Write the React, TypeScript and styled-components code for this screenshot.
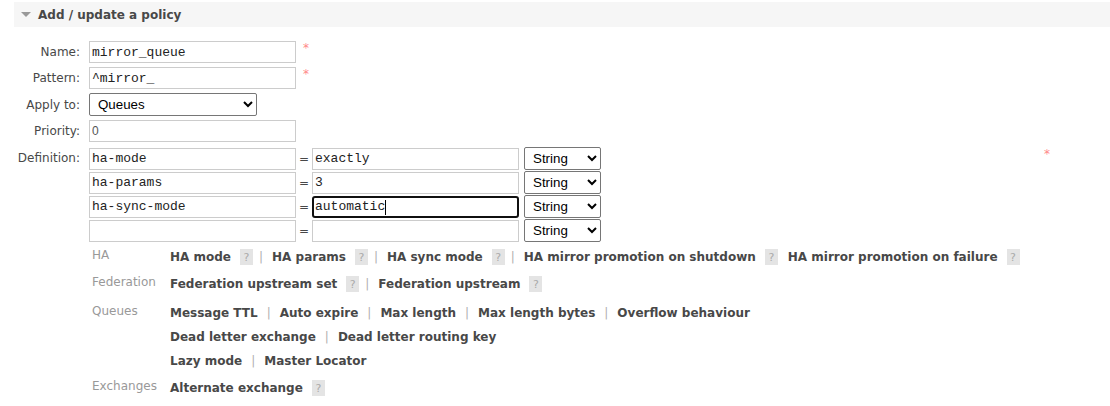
import React from "react";
import styled, { createGlobalStyle } from "styled-components";

const Global = createGlobalStyle`
  html, body { margin: 0; padding: 0; background: #fff; }
  body {
    font-family: "DejaVu Sans", Verdana, sans-serif;
    font-size: 12px;
    color: #484848;
  }
`;

const Section = styled.section`
  padding: 2px 0 0 14px;
`;

const SectionHeader = styled.div`
  display: flex;
  align-items: center;
  gap: 7px;
  height: 25px;
  padding-left: 7px;
  background: #f6f6f6;
`;

const Triangle = styled.span`
  width: 0;
  height: 0;
  border-left: 5px solid transparent;
  border-right: 5px solid transparent;
  border-top: 5px solid #999;
`;

const Title = styled.h2`
  margin: 0;
  font-size: 12px;
  font-weight: bold;
  color: #484848;
`;

const Form = styled.div`
  display: grid;
  grid-template-columns: 66px auto;
  column-gap: 9px;
  row-gap: 4px;
  margin-top: 14px;
`;

const Label = styled.label<{ $top?: boolean }>`
  display: flex;
  justify-content: flex-end;
  align-items: center;
  align-self: ${(p) => (p.$top ? "start" : "center")};
  height: 22px;
  margin-top: ${(p) => (p.$top ? 1 : 0)}px;
  white-space: nowrap;
  color: #484848;
`;

const FieldCell = styled.div`
  display: flex;
  align-items: flex-start;
  gap: 7px;
`;

const DefCell = styled.div`
  display: flex;
  align-items: flex-start;
  width: 961px;
  margin-top: 1px;
`;

const DefBody = styled.div`
  display: flex;
  flex-direction: column;
`;

const Mand = styled.span<{ $far?: boolean }>`
  color: #f88;
  font-size: 12px;
  line-height: 12px;
  margin-top: 1px;
  margin-left: ${(p) => (p.$far ? "auto" : "0")};
`;

const TextInput = styled.input<{ $sans?: boolean; $focused?: boolean; $w?: number }>`
  box-sizing: border-box;
  width: ${(p) => p.$w ?? 207}px;
  height: 22px;
  margin: 0;
  padding: 0 ${(p) => (p.$focused ? 1 : 2)}px;
  border: ${(p) => (p.$focused ? "2px solid #101010" : "1px solid #ccc")};
  border-radius: ${(p) => (p.$focused ? "3px" : "0")};
  background: #fff;
  color: ${(p) => (p.$sans ? "#555" : "#222")};
  font-family: ${(p) => (p.$sans ? '"Liberation Sans", Arial, sans-serif' : '"Liberation Mono", "Courier New", monospace')};
  font-size: ${(p) => (p.$sans ? "12px" : "13px")};
  outline: none;
`;

const Select = styled.select<{ $w: number }>`
  box-sizing: border-box;
  width: ${(p) => p.$w}px;
  height: 23px;
  margin: 0;
  padding-left: 4px;
  border: 1px solid #767676;
  border-radius: 2px;
  background: #fff;
  color: #000;
  font-family: "Liberation Sans", Arial, sans-serif;
  font-size: 13.33px;
`;

const MultiField = styled.div`
  display: flex;
  flex-direction: column;
  gap: 1px;
`;

const MultiRow = styled.div`
  display: flex;
  align-items: center;
  height: 23px;
`;

const Eq = styled.span`
  width: 16px;
  text-align: center;
  color: #484848;
`;

const TypeSelect = styled(Select)`
  margin-left: 5px;
`;

const CaretWrap = styled.span`
  position: relative;
  display: inline-flex;
`;

const Caret = styled.span<{ $left: number }>`
  position: absolute;
  top: 4px;
  left: ${(p) => p.$left}px;
  width: 1px;
  height: 15px;
  background: #000;
`;

const Help = styled.div`
  display: grid;
  grid-template-columns: 78px auto;
  margin: 3px 0 0 3px;
`;

const HelpLabel = styled.div`
  color: #999;
  line-height: 20px;
  white-space: nowrap;
`;

const HelpLinks = styled.div<{ $pad: number }>`
  padding-bottom: ${(p) => p.$pad}px;
`;

const LinkLine = styled.div`
  display: flex;
  align-items: center;
  height: 24px;
  white-space: nowrap;
`;

const Link = styled.span`
  font-weight: bold;
  color: #484848;
  cursor: pointer;
`;

const HelpMark = styled.span`
  display: inline-flex;
  align-items: center;
  justify-content: center;
  width: 13px;
  height: 16px;
  margin-left: 9px;
  background: #e4e4e4;
  color: #aaa;
  font-size: 11px;
`;

const Sep = styled.span<{ $afterMark?: boolean }>`
  color: #b0b0b0;
  margin: 0 9px 0 ${(p) => (p.$afterMark ? 6 : 9)}px;
`;

const Gap = styled.span`
  width: 10px;
`;

type Item = { text: string; help?: boolean; sep?: boolean };

const groups: { label: string; pad: number; lines: Item[][] }[] = [
  {
    label: "HA",
    pad: 3,
    lines: [
      [
        { text: "HA mode", help: true, sep: true },
        { text: "HA params", help: true, sep: true },
        { text: "HA sync mode", help: true, sep: true },
        { text: "HA mirror promotion on shutdown", help: true },
        { text: "HA mirror promotion on failure", help: true },
      ],
    ],
  },
  {
    label: "Federation",
    pad: 5,
    lines: [
      [
        { text: "Federation upstream set", help: true, sep: true },
        { text: "Federation upstream", help: true },
      ],
    ],
  },
  {
    label: "Queues",
    pad: 3,
    lines: [
      [
        { text: "Message TTL", sep: true },
        { text: "Auto expire", sep: true },
        { text: "Max length", sep: true },
        { text: "Max length bytes", sep: true },
        { text: "Overflow behaviour" },
      ],
      [{ text: "Dead letter exchange", sep: true }, { text: "Dead letter routing key" }],
      [{ text: "Lazy mode", sep: true }, { text: "Master Locator" }],
    ],
  },
  {
    label: "Exchanges",
    pad: 0,
    lines: [[{ text: "Alternate exchange", help: true }]],
  },
];

const defs = [
  { key: "ha-mode", value: "exactly" },
  { key: "ha-params", value: "3" },
  { key: "ha-sync-mode", value: "automatic", focused: true },
  { key: "", value: "" },
];

function TypeSel() {
  return (
    <TypeSelect $w={77} defaultValue="String">
      <option>String</option>
      <option>Number</option>
      <option>Boolean</option>
      <option>List</option>
    </TypeSelect>
  );
}

export default function App() {
  return (
    <>
      <Global />
      <Section>
        <SectionHeader>
          <Triangle />
          <Title>Add / update a policy</Title>
        </SectionHeader>
        <Form>
          <Label>Name:</Label>
          <FieldCell>
            <TextInput defaultValue="mirror_queue" />
            <Mand>*</Mand>
          </FieldCell>

          <Label>Pattern:</Label>
          <FieldCell>
            <TextInput defaultValue="^mirror_" />
            <Mand>*</Mand>
          </FieldCell>

          <Label>Apply to:</Label>
          <FieldCell>
            <Select $w={168} defaultValue="Queues">
              <option>Exchanges and queues</option>
              <option>Exchanges</option>
              <option>Queues</option>
            </Select>
          </FieldCell>

          <Label>Priority:</Label>
          <FieldCell>
            <TextInput $sans defaultValue="0" />
          </FieldCell>

          <Label $top>Definition:</Label>
          <DefCell>
            <DefBody>
              <MultiField>
                {defs.map((d, i) => (
                  <MultiRow key={i}>
                    <TextInput defaultValue={d.key} />
                    <Eq>=</Eq>
                    {d.focused ? (
                      <CaretWrap>
                        <TextInput $focused defaultValue={d.value} />
                        <Caret $left={73} />
                      </CaretWrap>
                    ) : (
                      <TextInput defaultValue={d.value} />
                    )}
                    <TypeSel />
                  </MultiRow>
                ))}
              </MultiField>
              <Help>
                {groups.map((g) => (
                  <React.Fragment key={g.label}>
                    <HelpLabel>{g.label}</HelpLabel>
                    <HelpLinks $pad={g.pad}>
                      {g.lines.map((line, li) => (
                        <LinkLine key={li}>
                          {line.map((it) => (
                            <React.Fragment key={it.text}>
                              <Link>{it.text}</Link>
                              {it.help && <HelpMark>?</HelpMark>}
                              {it.sep ? <Sep $afterMark={it.help}>|</Sep> : it.help ? <Gap /> : null}
                            </React.Fragment>
                          ))}
                        </LinkLine>
                      ))}
                    </HelpLinks>
                  </React.Fragment>
                ))}
              </Help>
            </DefBody>
            <Mand $far>*</Mand>
          </DefCell>
        </Form>
      </Section>
    </>
  );
}
